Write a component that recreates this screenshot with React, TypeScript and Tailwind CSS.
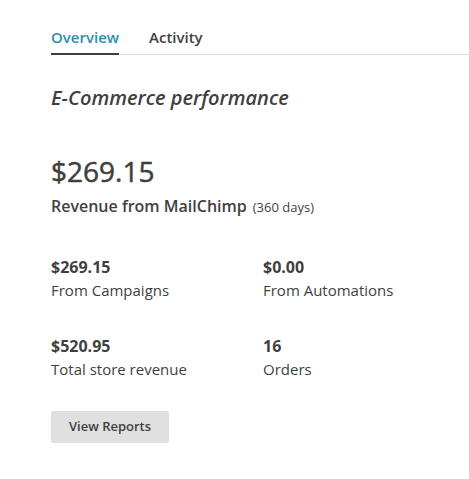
export default function App() {
  const stats = [
    { value: "$269.15", label: "From Campaigns" },
    { value: "$0.00", label: "From Automations" },
    { value: "$520.95", label: "Total store revenue" },
    { value: "16", label: "Orders" },
  ];
  return (
    <div
      className="min-h-[479px] w-[469px] bg-white pl-[51px] text-[#3f3f3f]"
      style={{ fontFamily: '"Open Sans", sans-serif' }}
    >
      <div className="pt-[26px]">
        <div className="flex border-b border-[#d9d9d9]">
          <div className="-mb-px border-b-2 border-[#3f3f3f] pb-[4px] text-[15px] font-semibold leading-[22.5px] text-[#2c8dac]">
            Overview
          </div>
          <div className="ml-[30px] pb-[4px] text-[15px] font-semibold leading-[22.5px] text-[#3f3f3f]">
            Activity
          </div>
        </div>
      </div>
      <h2 className="mt-[28px] text-[20px] font-semibold italic leading-[30px]">
        E-Commerce performance
      </h2>
      <div className="mt-[42px] text-[28px] leading-[33.6px] [-webkit-text-stroke:0.5px_#3f3f3f]">
        $269.15
      </div>
      <div className="mt-[6px] flex items-baseline text-[16px] font-semibold leading-[24px]">
        Revenue from MailChimp
        <span className="ml-[6px] text-[13px] font-normal">(360 days)</span>
      </div>
      <div className="mt-[36px] grid grid-cols-[212px_1fr] gap-y-[32px]">
        {stats.map((s) => (
          <div key={s.label}>
            <div className="text-[16px] font-bold leading-[24px]">{s.value}</div>
            <div className="text-[15px] leading-[22.5px]">{s.label}</div>
          </div>
        ))}
      </div>
      <button className="mt-[31px] h-[32px] w-[118px] rounded-[2px] bg-[#e0e0e0] text-[13px] font-semibold text-[#3f3f3f]">
        View Reports
      </button>
    </div>
  );
}
